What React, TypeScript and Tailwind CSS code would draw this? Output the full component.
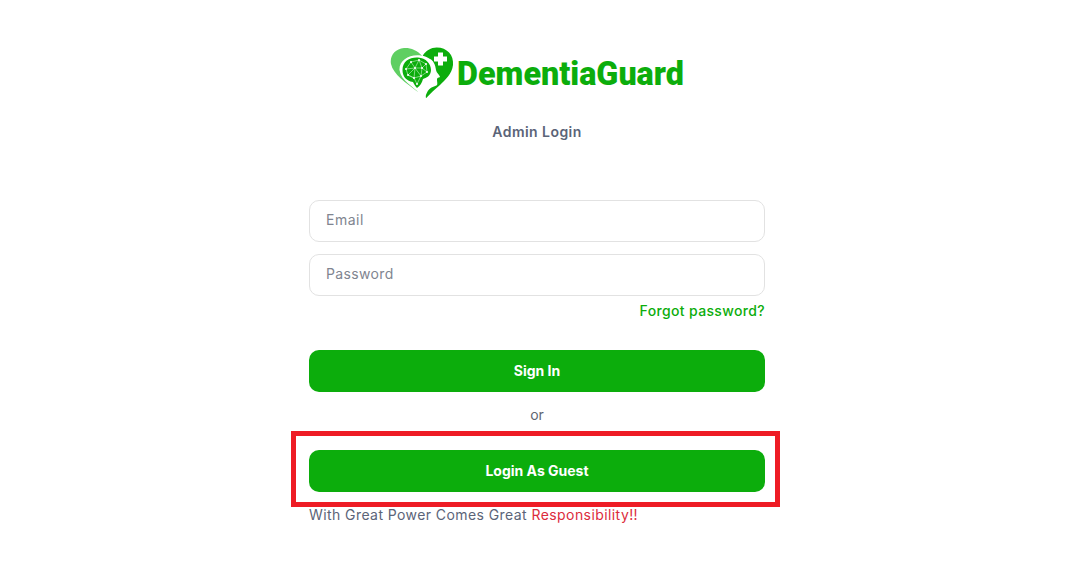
import * as React from "react"

function LogoMark() {
  return (
    <svg width="66" height="56" viewBox="0 0 66 56" className="shrink-0">
      {/* left heart lobe */}
      <path
        d="M32 10.700 C27 5 20 2.500 14 3 C5 3.800 -0.500 11 1 19 C3 29 16 38 28.300 47.300 C24 42 11 36 9.500 25 C9 15 20 8.500 32 10.700 Z"
        fill="#5fcf62"
      />
      {/* right heart lobe, the head is cut out of it */}
      <path
        d="M32.700 10.700 C36 5.500 41 2.500 46.700 2.500 C57 2.500 64 10 63 20 C62 29 55 35 50 40 C45 44 40 49 36 53.300 C35.500 51 36 49.500 36.700 48.300 C38 45 40 43 43.300 41.700 C45 41 47 41 47.300 39.300 C47.500 37 46.500 35 47.300 33.300 C48 32.500 50 32.500 50 31.700 C49 29 46.500 28 46 25 C45.500 20 43 15 40 14 C38 12.500 35 11 32.700 10.700 Z"
        fill="#0cad0c"
      />
      {/* brain */}
      <path
        d="M12.500 25 C12.500 16 20 12 28 12.500 C36 13 41 19 41 25 C41 31 36 33 33 34 C32 38 30 41 27 43 C25 41 24 39 23 37 C16 36 12.500 31 12.500 25 Z"
        fill="#0cad0c"
      />
      <g stroke="#c9f0c9" strokeWidth="0.6" fill="none">
        <path d="M16 24 L21 17 L29 15 L36 19 L37 27 L31 31 L24 33 L18 30 Z" />
        <path d="M21 17 L25 23 L29 15 M25 23 L32 23 L36 19 M32 23 L37 27 M32 23 L31 31 L25 23 M25 23 L16 24 M25 23 L24 33 L18 30 M25 23 L18 30 M29 15 L32 23 M24 33 L27 39 L31 31" />
      </g>
      <g fill="#ffffff">
        <circle cx="16" cy="24" r="1" />
        <circle cx="21" cy="17" r="1" />
        <circle cx="29" cy="15" r="1" />
        <circle cx="36" cy="19" r="1" />
        <circle cx="37" cy="27" r="1" />
        <circle cx="31" cy="31" r="1" />
        <circle cx="24" cy="33" r="1" />
        <circle cx="18" cy="30" r="1" />
        <circle cx="25" cy="23" r="1" />
        <circle cx="32" cy="23" r="1" />
        <circle cx="27" cy="39" r="1" />
      </g>
      {/* medical cross */}
      <path d="M48 7.500 H53 V11.500 H57 V16.500 H53 V20.500 H48 V16.500 H44 V11.500 H48 Z" fill="#ffffff" />
    </svg>
  )
}

export default function App() {
  return (
    <div className="min-h-[567px] bg-white font-['Inter',sans-serif] flex flex-col items-center pt-[45px]">
      {/* Logo */}
      <div className="flex items-center h-[56px]">
        <LogoMark />
        <span className="font-['Roboto',sans-serif] font-black text-[32.300px] leading-none text-[#0cad0c] ml-[1px] pt-[3px]">
          DementiaGuard
        </span>
      </div>

      <h1 className="mt-[21px] text-[14px] leading-[20px] font-semibold tracking-[0.45px] text-[#5b6478]">Admin Login</h1>

      <form className="w-[456px] mt-[58px] flex flex-col">
        <input
          placeholder="Email"
          className="h-[42px] px-4 pb-[3px] rounded-[10px] border border-[#e2e2e2] text-[14px] tracking-[0.5px] placeholder:text-[#7f8590] outline-none"
        />
        <input
          placeholder="Password"
          className="h-[42px] mt-3 px-4 pb-[3px] rounded-[10px] border border-[#e2e2e2] text-[14px] tracking-[0.35px] placeholder:text-[#7f8590] outline-none"
        />
        <a className="mt-[5px] self-end text-[14px] leading-[20px] font-medium tracking-[0.35px] text-[#0cad0c]">Forgot password?</a>

        <button type="button" className="mt-[29px] h-[42px] pb-[2px] rounded-[10px] bg-[#0cad0c] text-white text-[14px] font-bold">
          Sign In
        </button>

        <p className="mt-[13px] text-center text-[14px] leading-[20px] text-[#5f6672]">or</p>

        <div className="relative mt-[25px]">
          <button type="button" className="w-full h-[42px] pb-[2px] rounded-[10px] bg-[#0cad0c] text-white text-[14px] font-bold">
            Login As Guest
          </button>
          {/* red annotation frame */}
          <div className="absolute -left-[18px] -right-[15px] -top-[19px] -bottom-[15px] border-[5px] border-[#ee1c25] pointer-events-none" />
        </div>

        <p className="mt-[13px] text-[14px] leading-[20px] tracking-[0.42px] text-[#5b6478]">
          With Great Power Comes Great <span className="text-[#dc2b3c]">Responsibility!!</span>
        </p>
      </form>
    </div>
  )
}
